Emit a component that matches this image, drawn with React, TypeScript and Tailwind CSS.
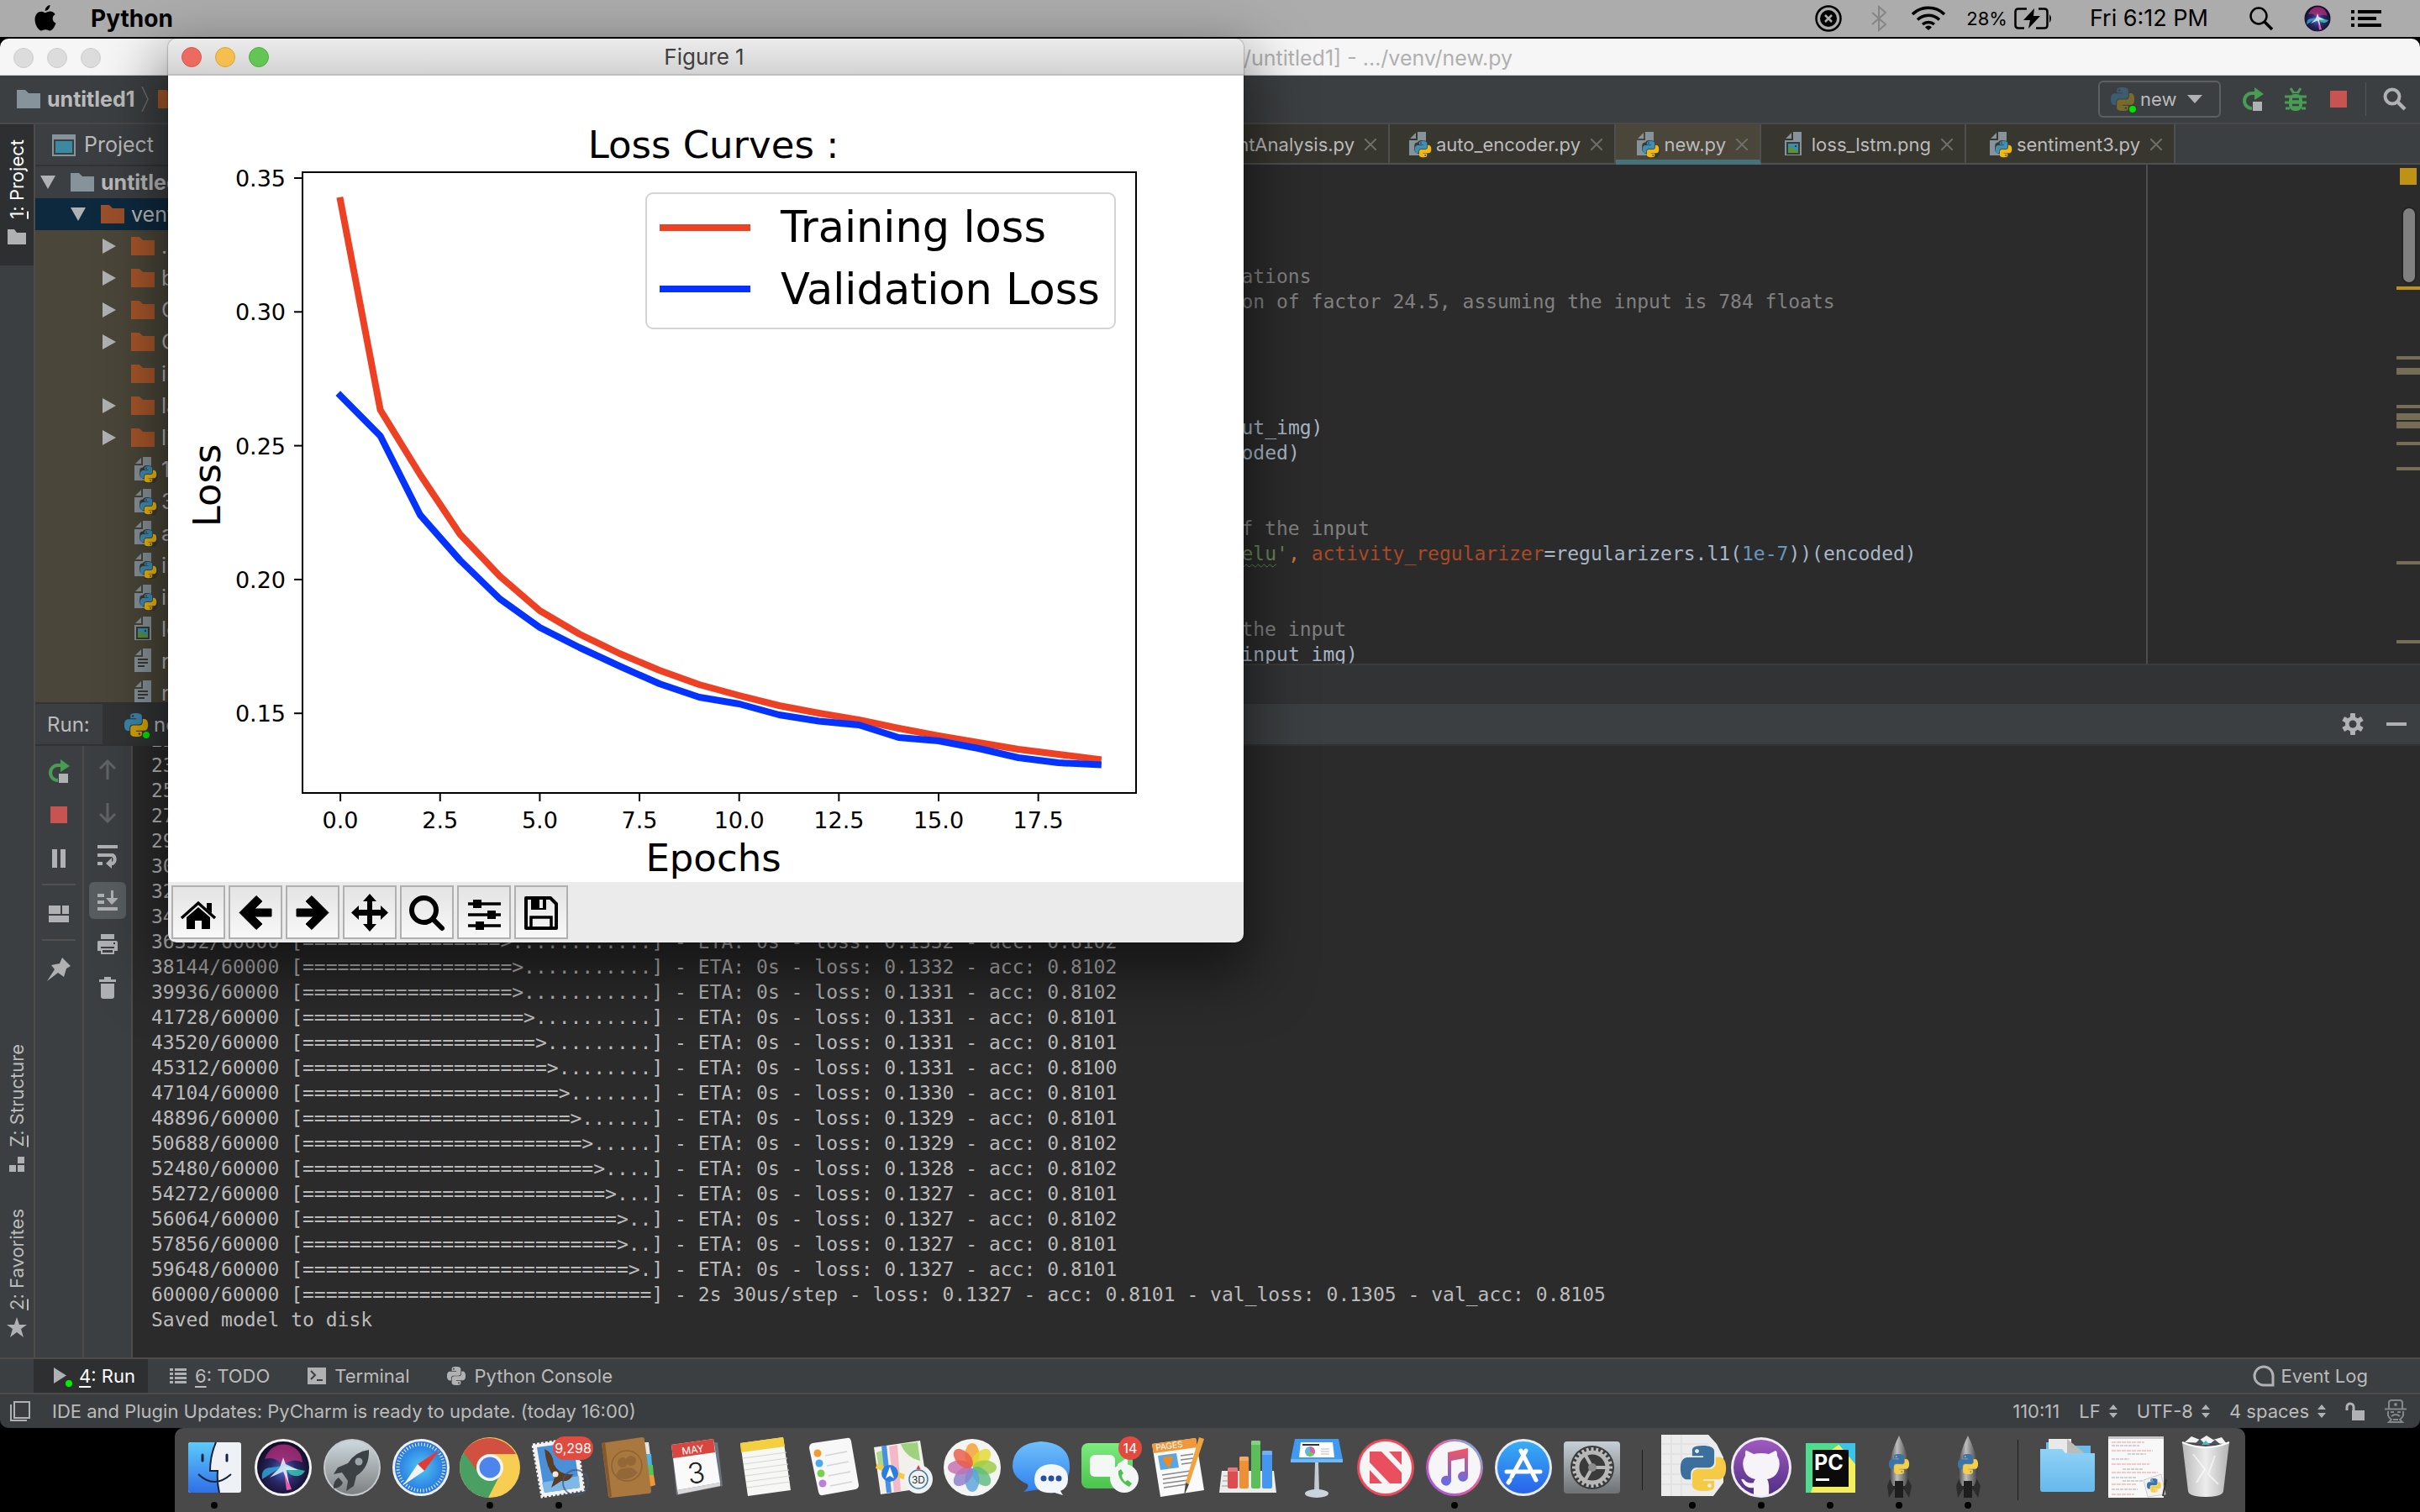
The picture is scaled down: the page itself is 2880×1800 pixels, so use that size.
import React from 'react';
import type { ReactNode } from 'react';

/* ---------- shared glyphs ---------- */

const PY_TOP =
  'M14.25.18l.9.2.73.26.59.3.45.32.34.34.25.34.16.33.1.3.04.26.02.2-.01.13V8.5l-.05.63-.13.55-.21.46-.26.38-.3.31-.33.25-.35.19-.35.14-.33.1-.3.07-.26.04-.21.02H8.77l-.69.05-.59.14-.5.22-.41.27-.33.32-.27.35-.2.36-.15.37-.1.35-.07.32-.04.27-.02.21v3.06H3.17l-.21-.03-.28-.07-.32-.12-.35-.18-.36-.26-.36-.36-.35-.46-.32-.59-.28-.73-.21-.88-.14-1.05-.05-1.23.06-1.22.16-1.04.24-.87.32-.71.36-.57.4-.44.42-.33.42-.24.4-.16.36-.1.32-.05.24-.01h.16l.06.01h8.16v-.83H6.18l-.01-2.75-.02-.37.05-.34.11-.31.17-.28.25-.26.31-.23.38-.2.44-.18.51-.15.58-.12.64-.1.71-.06.77-.04.84-.02 1.27.05zm-6.3 1.98l-.23.33-.08.41.08.41.23.34.33.22.41.09.41-.09.33-.22.23-.34.08-.41-.08-.41-.23-.33-.33-.22-.41-.09-.41.09z';
const PY_BOTTOM =
  'M21.04 6.11l.28.06.32.12.35.18.36.27.36.35.35.47.32.59.28.73.21.88.14 1.04.05 1.23-.06 1.23-.16 1.04-.24.86-.32.71-.36.57-.4.45-.42.33-.42.24-.4.16-.36.09-.32.05-.24.02-.16-.01h-8.22v.82h5.84l.01 2.76.02.36-.05.34-.11.31-.17.29-.25.25-.31.24-.38.2-.44.17-.51.15-.58.13-.64.09-.71.07-.77.04-.84.01-1.27-.04-1.07-.14-.9-.2-.73-.25-.59-.3-.45-.33-.34-.34-.25-.34-.16-.33-.1-.3-.04-.25-.02-.2.01-.13v-5.34l.05-.64.13-.54.21-.46.26-.38.3-.32.33-.24.35-.2.35-.14.33-.1.3-.06.26-.04.21-.02.13-.01h5.84l.69-.05.59-.14.5-.21.41-.28.33-.32.27-.35.2-.36.15-.36.1-.35.07-.32.04-.28.02-.21V6.07h2.09l.14.01zm-6.47 14.25l-.23.33-.08.41.08.41.23.33.33.23.41.08.41-.08.33-.23.23-.33.08-.41-.08-.41-.23-.33-.33-.23-.41-.08-.41.08z';

const PyMark = ({ top = '#3d8fb8', bottom = '#f0b90b' }: { top?: string; bottom?: string }) => (
  <>
    <path d={PY_TOP} fill={top} />
    <path d={PY_BOTTOM} fill={bottom} />
  </>
);

const RunPyIcon = ({ dim = false }: { dim?: boolean }) => (
  <svg viewBox="0 0 32 32" className="h-8 w-8 shrink-0">
    <g transform="translate(1 2) scale(1.17)" opacity={dim ? 0.45 : 0.9}>
      <PyMark top={dim ? '#3d7fa8' : '#3d8fb8'} bottom={dim ? '#c0a010' : '#e5b000'} />
    </g>
    <circle cx="27" cy="28" r="5" fill="#2b3b2b" />
    <circle cx="27" cy="28" r="4" fill="#00e400" />
  </svg>
);

const FileBase = ({ fill = '#87939a' }: { fill?: string }) => (
  <path d="M10 0H20V28H0V10H10ZM8 1V8H1Z" fill={fill} />
);

const FileIcon = ({ kind }: { kind: 'py' | 'img' | 'txt' }) => (
  <svg viewBox="0 0 28 32" className="h-8 w-7 shrink-0">
    <g transform="translate(0 1)">
      <FileBase />
      {kind === 'py' && (
        <g transform="translate(7 11) scale(.8)">
          <path d="M-1 7Q-1 2 4 2Q5-2 12-1Q19-1 19 5Q26 5 26 14Q26 24 18 26H6V19Q-1 18-1 12Z" fill="#3a3934" />
          <PyMark />
        </g>
      )}
      {kind === 'img' && (
        <>
          <rect x="2" y="12" width="16" height="15" fill="#3a3934" />
          <rect x="4" y="14" width="12" height="11" fill="#3a8fae" />
          <path d="M4 20Q8 16 11 20T16 20V25H4Z" fill="#5c9239" />
          <circle cx="13" cy="17" r="1" fill="#222" />
        </>
      )}
      {kind === 'txt' && <path d="M4 13H16M4 17H16M4 21H12" stroke="#3a3934" strokeWidth="2" />}
    </g>
  </svg>
);

const Folder = ({ fill }: { fill: string }) => (
  <svg viewBox="0 0 28 22" className="h-[22px] w-7 shrink-0">
    <path d="M0 0H10L14 4H28V22H0Z" fill={fill} />
  </svg>
);

const Rerun = () => (
  <svg viewBox="0 0 28 28" className="h-7 w-7 shrink-0">
    <path d="M17 7H13A9 9 0 0 0 13 25" fill="none" stroke="#499c54" strokeWidth="4" />
    <path d="M16 0L27 8L16 15Z" fill="#499c54" />
    <rect x="14" y="17" width="11" height="11" fill="#afb1b3" />
  </svg>
);

const StopIcon = () => <span className="block size-5 bg-[#c75450]" />;

/* ---------- macOS menu bar ---------- */

const MenuBar = () => (
  <header className="flex h-11 shrink-0 items-center bg-[#acacac] pr-[46px] pl-10 text-black">
    <svg viewBox="0 0 28 32" className="h-8 w-7 shrink-0">
      <path
        d="M19.5 0C19.7 3.6 16.8 6.9 13.7 7C13.4 3.7 16.4.4 19.5 0ZM14 9.2C15.2 9.2 17 7.600 19.800 7.600C21.600 7.600 24 8.500 25.600 10.900C21.300 13.500 22 19.800 26.500 21.500C25.600 24.500 22.600 30.500 19.300 30.500C17.300 30.500 16.500 29.300 14.200 29.300C11.900 29.300 10.900 30.500 9.200 30.500C5.800 30.500 1.500 23.300 1.500 17.200C1.500 11 5.400 7.700 9.100 7.700C11.300 7.700 13 9.200 14 9.200Z"
        fill="#000"
      />
    </svg>
    <span className="ml-10 text-[28px] leading-8 font-bold">Python</span>
    <div className="ml-auto flex items-center">
      <svg viewBox="0 0 32 32" className="h-8 w-8">
        <circle cx="16" cy="16" r="14.500" fill="none" stroke="#000" strokeWidth="2.500" />
        <circle cx="16" cy="16" r="10" fill="#000" />
        <path d="M12 12L20 20M20 12L12 20" stroke="#acacac" strokeWidth="2.500" />
      </svg>
      <svg viewBox="0 0 20 32" className="ml-[34px] h-8 w-5">
        <path d="M2 9L18 23L10 30V2L18 9L2 23" fill="none" stroke="#858585" strokeWidth="2" />
      </svg>
      <svg viewBox="0 0 42 30" className="ml-7 h-[30px] w-[42px]" fill="none" stroke="#000" strokeWidth="3.500">
        <path d="M2 10A27 27 0 0 1 40 10M8 16.500A19 19 0 0 1 34 16.500M14 22A11 11 0 0 1 28 22" />
        <path d="M21 29L17 25.500A5 5 0 0 1 25 25.500Z" fill="#000" stroke="none" />
      </svg>
      <span className="ml-6 text-[22px] leading-8">28%</span>
      <svg viewBox="0 0 46 26" className="ml-2 h-[26px] w-[46px]">
        <path d="M15 1.500H5Q1.500 1.500 1.500 5V21Q1.500 24.500 5 24.500H12M29 1.500H36Q39.500 1.500 39.500 5V21Q39.500 24.500 36 24.500H26" fill="none" stroke="#000" strokeWidth="2.500" />
        <path d="M24 1L11 15H19L17 25L31 10H23Z" fill="#000" />
        <path d="M42 8Q46 13 42 18Z" fill="#000" />
      </svg>
      <span className="ml-[44px] text-[27px] leading-8">Fri 6:12 PM</span>
      <svg viewBox="0 0 30 30" className="ml-12 h-[30px] w-[30px]">
        <circle cx="12" cy="12" r="9.500" fill="none" stroke="#000" strokeWidth="2.500" />
        <path d="M19 19L28 28" stroke="#000" strokeWidth="3.500" />
      </svg>
      <svg viewBox="0 0 82 82" className="ml-9 size-8">
        <SiriArt r={40} ring={40} cy={41} />
      </svg>
      <svg viewBox="0 0 36 22" className="ml-6 h-[22px] w-9" fill="#000">
        <path d="M0 1H4V5H0ZM8 1H36V5H8ZM0 9H4V13H0ZM8 9H30V13H8ZM0 17H4V21H0ZM8 17H36V21H8Z" />
      </svg>
    </div>
  </header>
);

/* ---------- IDE: top ---------- */

const IdeTitle = () => (
  <div className="flex h-11 shrink-0 items-center rounded-t-[10px] border-b border-[#cfcfcf] bg-[#f6f6f6] pt-[2px] pl-4">
    <div className="flex gap-4">
      {[0, 1, 2].map((i) => (
        <span key={i} className="size-6 rounded-full border border-[#cdcdcd] bg-[#dcdcdc]" />
      ))}
    </div>
    <span className="flex-1 pr-[60px] text-center text-[25px] leading-8 text-[#b0b0b0]">
      untitled1 [~/PycharmProjects/untitled1] - .../venv/new.py
    </span>
  </div>
);

const NavBar = () => (
  <div className="flex h-[58px] shrink-0 items-center border-b-2 border-[#4a4a4a] bg-[#3c3f41] pr-4 pl-5">
    <Folder fill="#87939a" />
    <span className="ml-2 text-[25px] leading-8 font-bold text-[#bbbbbb]">untitled1</span>
    <svg viewBox="0 0 10 30" className="mr-[10px] ml-2 h-[30px] w-[10px]">
      <path d="M1 0L8 15L1 30" fill="none" stroke="#6b6e70" strokeWidth="1.500" />
    </svg>
    <Folder fill="#a6562a" />
    <div className="ml-auto flex items-center">
      <label className="flex h-11 w-[146px] items-center rounded-md border-2 border-[#5e6060] pl-3">
        <RunPyIcon dim />
        <select aria-label="Run configuration" className="ml-1 w-[56px] appearance-none bg-transparent text-[22px] leading-8 text-[#bbbbbb]">
          <option>new</option>
        </select>
        <svg viewBox="0 0 18 10" className="h-[10px] w-[18px]">
          <path d="M0 0H18L9 10Z" fill="#afb1b3" />
        </svg>
      </label>
      <button aria-label="Rerun" className="ml-6"><Rerun /></button>
      <button aria-label="Debug" className="ml-6">
        <svg viewBox="0 0 26 28" className="h-7 w-[26px]">
          <path d="M8 7Q13 3 18 7Z" fill="#499c54" />
          <path d="M7 1L11 7M19 1L15 7" stroke="#499c54" strokeWidth="3" />
          <rect x="5" y="8" width="16" height="20" rx="7" fill="#499c54" />
          <path d="M0 11H26M0 18H26M1 25H6M20 25H25" stroke="#499c54" strokeWidth="3" />
          <path d="M9 14H17M9 21H17" stroke="#3c3f41" strokeWidth="2.500" />
        </svg>
      </button>
      <button aria-label="Stop" className="ml-7"><StopIcon /></button>
      <span className="mr-[20px] ml-[22px] h-10 w-px bg-[#555759]" />
      <button aria-label="Search">
        <svg viewBox="0 0 28 28" className="size-7">
          <circle cx="11" cy="11" r="8.500" fill="none" stroke="#afb1b3" strokeWidth="4" />
          <path d="M17 17L26 26" stroke="#afb1b3" strokeWidth="4.500" />
        </svg>
      </button>
    </div>
  </div>
);

/* ---------- IDE: left stripe ---------- */

const Vertical = ({ hot, text, active = false }: { hot: string; text: string; active?: boolean }) => (
  <span className={`rotate-180 text-[22px] leading-7 [writing-mode:vertical-rl] ${active ? 'text-white' : 'text-[#bbbbbb]'}`}>
    <span className="underline">{hot}</span>: {text}
  </span>
);

const Stripe = () => (
  <nav className="flex w-[42px] shrink-0 flex-col justify-between border-r-2 border-[#4e4b48] bg-[#3c3f41]">
    <button className="flex h-[168px] flex-col items-center gap-3 bg-[#2d2f31] pt-[18px]">
      <Vertical hot="1" text="Project" active />
      <svg viewBox="0 0 22 18" className="h-[18px] w-[22px]">
        <path d="M0 0H8L11 4H22V18H0Z" fill="#afb1b3" />
      </svg>
    </button>
    <div className="flex flex-col items-center gap-[44px] pb-6">
      <button className="flex flex-col items-center gap-3">
        <Vertical hot="Z" text="Structure" />
        <svg viewBox="0 0 18 18" className="size-[18px]" fill="#afb1b3">
          <path d="M10 0H18V8H10ZM0 10H8V18H0ZM10 10H18V18H10Z" />
        </svg>
      </button>
      <button className="flex flex-col items-center gap-2">
        <Vertical hot="2" text="Favorites" />
        <svg viewBox="0 0 24 24" className="size-6">
          <path d="M12 0L15 9H24L17 14L20 24L12 18L4 24L7 14L0 9H9Z" fill="#afb1b3" />
        </svg>
      </button>
    </div>
  </nav>
);

/* ---------- IDE: project tree ---------- */

type Row = { name: string; kind: 'dir' | 'py' | 'img' | 'txt'; arrow?: boolean };
const ROWS: Row[] = [
  { name: '.idea', kind: 'dir', arrow: true },
  { name: 'bin', kind: 'dir', arrow: true },
  { name: 'CNN', kind: 'dir', arrow: true },
  { name: 'Corpus', kind: 'dir', arrow: true },
  { name: 'include', kind: 'dir' },
  { name: 'labels', kind: 'dir', arrow: true },
  { name: 'lib', kind: 'dir', arrow: true },
  { name: '1.py', kind: 'py' },
  { name: '3.py', kind: 'py' },
  { name: 'auto_encoder.py', kind: 'py' },
  { name: 'image.py', kind: 'py' },
  { name: 'images.py', kind: 'py' },
  { name: 'loss_lstm.png', kind: 'img' },
  { name: 'results.txt', kind: 'txt' },
  { name: 'reviews.txt', kind: 'txt' },
];

const Down = () => (
  <svg viewBox="0 0 18 16" className="mr-[18px] h-4 w-[18px] shrink-0"><path d="M0 0H18L9 16Z" fill="#afb1b3" /></svg>
);

const Tree = () => (
  <aside className="flex w-[760px] shrink-0 flex-col overflow-hidden border-r-2 border-[#323232] bg-[#4a4639] text-[25px] text-[#bbbbbb]">
    <div className="flex h-[50px] shrink-0 items-center border-b-2 border-[#323232] bg-[#3c3f41] pt-[2px] pl-5">
      <svg viewBox="0 0 28 26" className="h-[26px] w-7">
        <path d="M0 0H28V26H0ZM2 6V24H26V6Z" fill="#87939a" fillRule="evenodd" />
        <rect x="4" y="8" width="20" height="14" fill="#3d89a2" />
      </svg>
      <span className="ml-[10px]">Project</span>
    </div>
    <ul className="min-h-0 flex-1 overflow-hidden leading-[38px]">
      <li className="flex h-[38px] items-center bg-[#3c3f41] pl-[6px] font-bold">
        <Down />
        <Folder fill="#87939a" />
        <span className="ml-2">untitled1</span>
      </li>
      <li className="flex h-[38px] items-center bg-[#0d293e] pl-[42px]">
        <Down />
        <Folder fill="#9c4f2b" />
        <span className="ml-2">venv</span>
      </li>
      {ROWS.map((r) => (
        <li key={r.name} className="flex h-[38px] items-center pl-20">
          <svg viewBox="0 0 16 18" className="mr-[18px] h-[18px] w-4 shrink-0">
            {r.arrow && <path d="M0 0V18L16 9Z" fill="#afb1b3" />}
          </svg>
          {r.kind === 'dir' ? (
            <Folder fill="#a6562a" />
          ) : (
            <span className="w-7 shrink-0 pl-1"><FileIcon kind={r.kind} /></span>
          )}
          <span className="ml-2">{r.name}</span>
        </li>
      ))}
    </ul>
  </aside>
);

/* ---------- IDE: editor ---------- */

const Tab = ({ name, width, kind = 'py', active = false }: { name: string; width: string; kind?: 'py' | 'img'; active?: boolean }) => (
  <button
    className={`flex shrink-0 items-center justify-end border-r-2 border-[#4d4f50] pr-[14px] text-[22px] text-[#bbbbbb] ${width} ${
      active ? 'border-b-[6px] border-b-[#47727a] bg-[#4a4639] pt-[6px]' : 'border-b-2 border-b-[#4d4f50] bg-[#37362f] pt-[2px]'
    }`}
  >
    <FileIcon kind={kind} />
    <span className="mr-3 ml-1">{name}</span>
    <svg viewBox="0 0 14 14" className="size-[14px]"><path d="M0 0L14 14M14 0L0 14" stroke="#6e6e6a" strokeWidth="2" /></svg>
  </button>
);

const C = ({ children }: { children: ReactNode }) => <span className="text-[#808080]">{children}</span>;
const K = ({ children }: { children: ReactNode }) => <span className="text-[#aa4926]">{children}</span>;
const N = ({ children }: { children: ReactNode }) => <span className="text-[#6897bb]">{children}</span>;
const Str = ({ children }: { children: ReactNode }) => <span className="text-[#6a8759]">{children}</span>;
const O = ({ children }: { children: ReactNode }) => <span className="text-[#cc7832]">{children}</span>;

const CODE: ReactNode[] = [
  '', '', '', '',
  <C># this is the size of our encoded representations</C>,
  <>encoding_dim = <N>32</N>  <C># 32 floats -&gt; compression of factor 24.5, assuming the input is 784 floats</C></>,
  '', '', '', '',
  <>encoded = Dense(<N>128</N><O>,</O> <K>activation</K>=<Str>'relu'</Str>)(input_img)</>,
  <>decoded = Dense(<N>784</N><O>,</O> <K>activation</K>=<Str>'relu'</Str>)(encoded)</>,
  '', '',
  <C># "encoded" is the encoded representation of the input</C>,
  <>encoded = Dense(encoding_dim<O>,</O> <K>activation</K>=<Str>'<span className="underline decoration-[#5b8a5b] decoration-wavy decoration-1 underline-offset-4">relu</span>'</Str><O>,</O> <K>activity_regularizer</K>=regularizers.l1(<N>1e-7</N>))(encoded)</>,
  '', '',
  <C># "decoded" is the lossy reconstruction of the input</C>,
  <>decoded = Dense(<N>784</N><O>,</O> <K>activation</K>=<Str>'sigmoid'</Str>)(input_img)</>,
];

const MARKS = [
  { top: 145, h: 4, hot: true },
  { top: 228, h: 4 }, { top: 242, h: 8 }, { top: 286, h: 4 }, { top: 296, h: 8 }, { top: 306, h: 8 },
  { top: 330, h: 4 }, { top: 360, h: 4 }, { top: 472, h: 4 }, { top: 566, h: 4 },
];

const Editor = () => (
  <section className="flex min-w-0 flex-1 flex-col">
    <div className="flex h-12 shrink-0 bg-[#3c3f41]">
      <div className="w-[522px] shrink-0 border-b-2 border-[#4d4f50] bg-[#37362f]" />
      <Tab name="sentimentAnalysis.py" width="w-[330px]" />
      <Tab name="auto_encoder.py" width="w-[269px]" />
      <Tab name="new.py" width="w-[173px]" active />
      <Tab name="loss_lstm.png" width="w-[244px]" kind="img" />
      <Tab name="sentiment3.py" width="w-[249px]" />
      <div className="flex-1 border-b-2 border-[#4d4f50]" />
    </div>
    <div className="flex min-h-0 flex-1 overflow-hidden bg-[#2b2b2b]">
      <div className="flex-1 overflow-hidden border-r-2 border-[#4d4d4d]">
        <pre className="-mt-[2px] pl-20 font-['DejaVu_Sans_Mono',monospace] text-[23px] leading-[30px] text-[#a9b7c6]">
          {CODE.map((line, i) => (
            <div key={i} className="h-[30px]">{line}</div>
          ))}
        </pre>
      </div>
      <div className="w-[296px] shrink-0" />
      <div className="relative w-7 shrink-0">
        <span className="absolute top-1 left-1 size-5 bg-[#be9117]" />
        <span className="absolute top-[50px] left-[6px] h-[92px] w-[18px] rounded-full border-2 border-[#232323] bg-[#808080]" />
        {MARKS.map((m) => (
          <span key={m.top} className={`absolute w-full ${m.hot ? 'bg-[#be9117]' : 'bg-[#756d56]'}`} style={{ top: m.top, height: m.h }} />
        ))}
      </div>
    </div>
    <div className="h-[46px] shrink-0 border-t-2 border-[#3c3c3c] bg-[#313335]" />
  </section>
);

/* ---------- IDE: run tool window ---------- */

const STEPS: [number, string, string][] = [
  [22016, '0.1334', '0.8101'], [23808, '0.1334', '0.8101'], [25600, '0.1333', '0.8102'], [27392, '0.1333', '0.8102'],
  [29184, '0.1333', '0.8102'], [30976, '0.1333', '0.8102'], [32768, '0.1332', '0.8102'], [34560, '0.1332', '0.8102'],
  [36352, '0.1332', '0.8102'], [38144, '0.1332', '0.8102'], [39936, '0.1331', '0.8102'], [41728, '0.1331', '0.8101'],
  [43520, '0.1331', '0.8101'], [45312, '0.1331', '0.8100'], [47104, '0.1330', '0.8101'], [48896, '0.1329', '0.8101'],
  [50688, '0.1329', '0.8102'], [52480, '0.1328', '0.8102'], [54272, '0.1327', '0.8101'], [56064, '0.1327', '0.8102'],
  [57856, '0.1327', '0.8101'], [59648, '0.1327', '0.8101'],
];
const progress = (n: number) => {
  const p = Math.floor((30 * n) / 60000);
  return '='.repeat(p - 1) + '>' + '.'.repeat(30 - p);
};
const CONSOLE = [
  ...STEPS.map(([n, l, a]) => `${n}/60000 [${progress(n)}] - ETA: 0s - loss: ${l} - acc: ${a}`),
  `60000/60000 [${'='.repeat(30)}] - 2s 30us/step - loss: 0.1327 - acc: 0.8101 - val_loss: 0.1305 - val_acc: 0.8105`,
  'Saved model to disk',
].join('\n');

const Gear = () => (
  <svg viewBox="0 0 26 26" className="size-[26px]">
    <g fill="#afb1b3">
      {[0, 60, 120].map((a) => (
        <rect key={a} x="10" y="0" width="6" height="26" rx="1" transform={`rotate(${a} 13 13)`} />
      ))}
      <circle cx="13" cy="13" r="9" />
    </g>
    <circle cx="13" cy="13" r="4.500" fill="#3c3f41" />
  </svg>
);

const SideBtn = ({ label, children, cls = 'h-7' }: { label: string; children: ReactNode; cls?: string }) => (
  <button aria-label={label} className={`flex w-11 items-center justify-center ${cls}`}>{children}</button>
);

const RunWindow = () => (
  <section className="flex h-[780px] shrink-0 flex-col border-t-2 border-[#323232] bg-[#3c3f41]">
    <div className="flex h-[50px] shrink-0 items-center border-b-2 border-[#323232] text-2xl text-[#bbbbbb]">
      <span className="w-20 pt-[2px] pl-[14px]">Run:</span>
      <div className="flex h-full w-[200px] items-center bg-[#313335] pt-[2px] pl-[25px]">
        <RunPyIcon />
        <span className="ml-1">new</span>
      </div>
      <div className="ml-auto flex items-center gap-[27px] pr-4">
        <button aria-label="Settings"><Gear /></button>
        <button aria-label="Hide" className="h-1 w-6 bg-[#afb1b3]" />
      </div>
    </div>
    <div className="flex min-h-0 flex-1">
      <div className="flex w-[58px] shrink-0 flex-col items-center border-r-2 border-[#4e4b48] pt-4">
        <SideBtn label="Rerun"><Rerun /></SideBtn>
        <SideBtn label="Stop" cls="mt-6 h-7"><StopIcon /></SideBtn>
        <SideBtn label="Pause" cls="mt-6 h-7">
          <svg viewBox="0 0 16 22" className="h-[22px] w-4"><path d="M0 0H6V22H0ZM10 0H16V22H10Z" fill="#afb1b3" /></svg>
        </SideBtn>
        <span className="mt-4 h-[2px] w-10 bg-[#515151]" />
        <SideBtn label="Layout" cls="mt-5 h-7">
          <svg viewBox="0 0 24 20" className="h-5 w-6"><path d="M0 0H14V10H0ZM16 0H24V10H16ZM0 12H24V20H0Z" fill="#afb1b3" /></svg>
        </SideBtn>
        <span className="mt-4 h-[2px] w-10 bg-[#515151]" />
        <SideBtn label="Pin" cls="mt-5 h-7">
          <svg viewBox="0 0 28 28" className="size-7"><path d="M18 0L28 10L23 13L20 23L13 18L0 28L9 14L5 9L15 7Z" fill="#afb1b3" /></svg>
        </SideBtn>
      </div>
      <div className="flex w-[58px] shrink-0 flex-col items-center border-r-2 border-[#4e4b48] pt-[14px]">
        <SideBtn label="Up">
          <svg viewBox="0 0 20 24" className="h-6 w-5"><path d="M10 24V2M1 11L10 2L19 11" fill="none" stroke="#616365" strokeWidth="3" /></svg>
        </SideBtn>
        <SideBtn label="Down" cls="mt-6 h-7">
          <svg viewBox="0 0 20 24" className="h-6 w-5"><path d="M10 0V22M1 13L10 22L19 13" fill="none" stroke="#616365" strokeWidth="3" /></svg>
        </SideBtn>
        <SideBtn label="Soft wrap" cls="mt-6 h-7">
          <svg viewBox="0 0 28 28" className="size-7">
            <path d="M2 2H26M2 12H20A6 6 0 0 1 20 22H17" fill="none" stroke="#afb1b3" strokeWidth="4" />
            <path d="M19 15V28L12 22ZM2 20H8V24H2Z" fill="#afb1b3" />
          </svg>
        </SideBtn>
        <SideBtn label="Scroll to end" cls="mt-4 h-11 rounded-md bg-[#585d60]">
          <svg viewBox="0 0 24 24" className="size-6" fill="#afb1b3"><path d="M0 4H8V8H0ZM0 12H8V16H0ZM0 20H24V24H0ZM16 0H19V9H25L17 17L10 9H16Z" /></svg>
        </SideBtn>
        <SideBtn label="Print" cls="mt-4 h-7">
          <svg viewBox="0 0 24 24" className="size-6">
            <path d="M4 0H20V6H4ZM0 9Q0 8 2 8H22Q24 8 24 10V20H20V15H4V20H0ZM4 17H20V24H4ZM6 19V22H18V19Z" fill="#afb1b3" fillRule="evenodd" />
            <rect x="19" y="10" width="2" height="2" fill="#3c3f41" />
          </svg>
        </SideBtn>
        <SideBtn label="Clear" cls="mt-6 h-7">
          <svg viewBox="0 0 20 26" className="h-[26px] w-5" fill="#afb1b3"><path d="M6 0H14V3H20V6H0V3H6ZM2 8H18V23Q18 26 15 26H5Q2 26 2 23Z" /></svg>
        </SideBtn>
      </div>
      <div className="flex min-w-0 flex-1 flex-col justify-end overflow-hidden bg-[#2b2b2b] pb-[30px] pl-[22px]">
        <pre className="font-['DejaVu_Sans_Mono',monospace] text-[23px] leading-[30px] text-[#bbbbbb]">{CONSOLE}</pre>
      </div>
    </div>
  </section>
);

/* ---------- IDE: bottom ---------- */

const ToolBtn = ({ icon, hot, text }: { icon: ReactNode; hot?: string; text: string }) => (
  <button className="flex items-center gap-[10px]">
    {icon}
    <span>{hot && <><span className="underline underline-offset-4">{hot}</span>: </>}{text}</span>
  </button>
);

const BottomBar = () => (
  <div className="flex h-[44px] shrink-0 items-center border-y-2 border-[#4e4b48] bg-[#3c3f41] pr-[62px] pl-10 text-[22px] text-[#bbbbbb]">
    <button className="flex h-full w-[136px] items-center bg-[#2d2f31] pl-6 text-white">
      <svg viewBox="0 0 24 26" className="mr-[6px] h-[26px] w-6">
        <path d="M0 3V22L15 12.500Z" fill="#afb1b3" />
        <circle cx="18" cy="22" r="4" fill="#00f000" />
      </svg>
      <span><span className="underline underline-offset-4">4</span>: Run</span>
    </button>
    <div className="ml-[26px] flex items-center gap-[45px]">
      <ToolBtn hot="6" text="TODO" icon={<svg viewBox="0 0 20 18" className="h-[18px] w-5" fill="#afb1b3"><path d="M0 0H4V3H0ZM6 0H20V3H6ZM0 5H4V8H0ZM6 5H20V8H6ZM0 10H4V13H0ZM6 10H20V13H6ZM0 15H4V18H0ZM6 15H20V18H6Z" /></svg>} />
      <ToolBtn text="Terminal" icon={<svg viewBox="0 0 22 20" className="h-5 w-[22px]"><rect width="22" height="20" fill="#afb1b3" /><path d="M4 4L9 9L4 14M11 15H18" fill="none" stroke="#3c3f41" strokeWidth="2" /></svg>} />
      <ToolBtn text="Python Console" icon={<svg viewBox="0 0 24 24" className="size-[22px]"><PyMark top="#afb1b3" bottom="#afb1b3" /></svg>} />
    </div>
    <button className="ml-auto flex items-center gap-2">
      <svg viewBox="0 0 26 26" className="size-[26px]"><path d="M13 2A11 11 0 1 0 13 24H24V13A11 11 0 0 0 13 2Z" fill="none" stroke="#afb1b3" strokeWidth="3" /></svg>
      Event Log
    </button>
  </div>
);

const UpDown = () => (
  <svg viewBox="0 0 10 16" className="h-4 w-[10px]"><path d="M0 6L5 0L10 6ZM0 10H10L5 16Z" fill="#afb1b3" /></svg>
);
const Pick = ({ label, value }: { label: string; value: string }) => (
  <label className="flex items-center gap-[10px]">
    <select aria-label={label} className="appearance-none bg-transparent [field-sizing:content]"><option>{value}</option></select>
    <UpDown />
  </label>
);

const StatusBar = () => (
  <footer className="flex h-10 shrink-0 items-center rounded-b-[10px] bg-[#3a3d3f] pr-4 pl-3 text-[22px] leading-7 text-[#bbbbbb]">
    <svg viewBox="0 0 24 24" className="size-6"><path d="M5 1H23V20H5ZM1 4V23H20" fill="none" stroke="#afb1b3" strokeWidth="2" /></svg>
    <span className="ml-[26px]">IDE and Plugin Updates: PyCharm is ready to update. (today 16:00)</span>
    <div className="ml-auto flex items-center gap-[23px]">
      <span>110:11</span>
      <Pick label="Line separator" value="LF" />
      <Pick label="Encoding" value="UTF-8" />
      <Pick label="Indent" value="4 spaces" />
      <svg viewBox="0 0 24 22" className="h-[22px] w-6"><path d="M2 10V6A4 4 0 0 1 10 6V10" fill="none" stroke="#afb1b3" strokeWidth="3" /><rect x="8" y="10" width="15" height="12" fill="#afb1b3" /></svg>
      <svg viewBox="0 0 26 28" className="h-7 w-[26px]" fill="none" stroke="#85888a" strokeWidth="2">
        <path d="M5 11V4Q5 1 8 1H18Q21 1 21 4V11M0 11.500H26M4 14V19Q5 22 8 24L5 27H21L18 24Q21 22 22 19V14M8 20Q13 16 18 20M10 24H16" />
        <circle cx="13" cy="6" r="1" />
        <path d="M7 15H11M15 15H19" />
      </svg>
    </div>
  </footer>
);

/* ---------- matplotlib window ---------- */

const TRAIN = [238.6, 488, 565, 636, 686, 727, 755, 778, 798, 815, 828, 840, 849, 857, 867, 876, 884, 892, 898, 904];
const VALID = [471, 519, 613, 667, 713, 747, 771, 793, 814, 830, 838, 851, 858.5, 863, 878, 882, 891, 902, 908, 910.400];
const px = (e: number) => 205.1 + e * 47.46;
const pts = (ys: number[]) => ys.map((y, i) => `${px(i).toFixed(1)},${y - 90}`).join(' ');

const Plot = () => (
  <svg viewBox="0 0 1280 960" className="block h-[960px] w-full bg-white font-['DejaVu_Sans',sans-serif]">
    <text x="649" y="98" fontSize="45" textAnchor="middle">Loss Curves :</text>
    <text x="649" y="947" fontSize="45" textAnchor="middle">Epochs</text>
    <text x="62" y="488" fontSize="45" textAnchor="middle" transform="rotate(-90 62 488)">Loss</text>
    <g stroke="#000" strokeWidth="2">
      <rect x="160" y="115" width="992" height="739" fill="none" />
      {[0, 1, 2, 3, 4].map((i) => <path key={i} d={`M150 ${122 + i * 159.3}H160`} />)}
      {[0, 1, 2, 3, 4, 5, 6, 7].map((i) => <path key={i} d={`M${px(i * 2.5)} 854V864`} />)}
    </g>
    <g fontSize="27">
      {['0.35', '0.30', '0.25', '0.20', '0.15'].map((t, i) => (
        <text key={t} x="140" y={132 + i * 159.3} textAnchor="end">{t}</text>
      ))}
      {['0.0', '2.5', '5.0', '7.5', '10.0', '12.5', '15.0', '17.5'].map((t, i) => (
        <text key={t} x={px(i * 2.5)} y="896" textAnchor="middle">{t}</text>
      ))}
    </g>
    <g fill="none" strokeWidth="8" strokeLinecap="square" strokeLinejoin="round">
      <polyline points={pts(TRAIN)} stroke="#ee4023" />
      <polyline points={pts(VALID)} stroke="#0433ff" />
      <rect x="569" y="140" width="558" height="161" rx="8" fill="#fff" fillOpacity=".8" stroke="#d4d4d4" strokeWidth="2" />
      <path d="M589 181H689" stroke="#ee4023" />
      <path d="M589 254H689" stroke="#0433ff" />
    </g>
    <g fontSize="51">
      <text x="729" y="198">Training loss</text>
      <text x="729" y="272">Validation Loss</text>
    </g>
  </svg>
);

const FIG_BTNS: [string, ReactNode][] = [
  ['Home', <><path d="M12 39L32 21L52 39" fill="none" stroke="#000" strokeWidth="3.500" /><path d="M42 21H48V33L42 28ZM18 38L32 26L46 38V52H36V42H28V52H18Z" /></>],
  ['Back', <path d="M51 28V37H31L40 46L33 52.500L13 32.500L33 12.500L40 19L31 28Z" strokeLinejoin="round" stroke="#000" strokeWidth="1" />],
  ['Forward', <path d="M13 28V37H33L24 46L31 52.500L51 32.500L31 12.500L24 19L33 28Z" strokeLinejoin="round" stroke="#000" strokeWidth="1" />],
  ['Pan', <path d="M32 10L40 19H35V29H45V24L54 32.500L45 41V36H35V46H40L32 55L24 46H29V36H19V41L10 32.500L19 24V29H29V19H24Z" />],
  ['Zoom', <><circle cx="28.500" cy="29.500" r="14.500" fill="none" stroke="#000" strokeWidth="6" /><path d="M39 40L50 51" stroke="#000" strokeWidth="6" strokeLinecap="round" /></>],
  ['Configure', <><path d="M13 22H52M13 35H52M13 48H52" stroke="#000" strokeWidth="3.500" /><path d="M19 17H29V27H19ZM36 30H46V40H36ZM22 43H32V53H22Z" /></>],
  ['Save', <><path d="M14 15H43L50 22V51H14Z" fill="none" stroke="#000" strokeWidth="4" strokeLinejoin="round" /><path d="M20 15H38V29H20ZM30 17V27H34V17Z" fillRule="evenodd" /><rect x="20" y="38" width="24" height="13" fill="none" stroke="#000" strokeWidth="3.500" /></>],
];

const FigureWindow = () => (
  <div className="absolute top-[46px] left-[200px] w-[1280px] overflow-hidden rounded-[10px] bg-[#ebebeb] shadow-[0_30px_70px_10px_rgba(0,0,0,0.5),0_0_2px_rgba(0,0,0,0.6)]">
    <div className="relative flex h-11 items-center border-b-2 border-[#bdbdbd] bg-gradient-to-b from-[#ececec] to-[#d3d3d3] pt-[2px] pl-4">
      <div className="flex gap-4">
        <button aria-label="Close" className="size-6 rounded-full border border-[#d5574f] bg-[#ed6a5e]" />
        <button aria-label="Minimize" className="size-6 rounded-full border border-[#dca23a] bg-[#f5bf4f]" />
        <button aria-label="Maximize" className="size-6 rounded-full border border-[#4fae3f] bg-[#62c554]" />
      </div>
      <span className="mr-[124px] flex-1 text-center text-[26px] leading-8 text-[#404040]">Figure 1</span>
    </div>
    <Plot />
    <div className="flex h-[72px] gap-1 p-1">
      {FIG_BTNS.map(([label, art]) => (
        <button key={label} aria-label={label} className="size-16 border-2 border-[#b0b0b0] bg-gradient-to-b from-[#e4e4e4] to-[#f8f8f8]">
          <svg viewBox="2 2 60 60" className="size-[60px]">{art}</svg>
        </button>
      ))}
    </div>
  </div>
);

/* ---------- dock ---------- */

function SiriArt({ r, ring, cy }: { r: number; ring: number; cy: number }) {
  const s = r / 31;
  const id = `siri${r}`;
  return (
    <>
      <defs>
        <radialGradient id={id} cx=".5" cy=".55" r=".55">
          <stop offset="0" stopColor="#4d6fd0" /><stop offset=".45" stopColor="#2a2a68" /><stop offset="1" stopColor="#120a22" />
        </radialGradient>
      </defs>
      <circle cx="41" cy={cy} r={ring} fill="#f2f2f2" />
      <circle cx="41" cy={cy} r={r} fill={`url(#${id})`} />
      <g transform={`translate(41 ${cy}) scale(${s})`}>
        <path d="M-22-10Q-14-30 6-27Q22-22 23-6Q10-12 0-2Q-10-14-22-10Z" fill="#c2307f" opacity=".7" />
        <path d="M0-2L26 4Q20 14 8 8Z" fill="#35d0b8" opacity=".8" />
        <path d="M0-2L-25 14Q-27 0-14 0Z" fill="#2cb6e0" opacity=".75" />
        <path d="M0-2L10 26L4 27Z" fill="#e05ab0" />
        <path d="M0-12L3-4L18 3L4 3L7 20L0 5L-16 12L-4 0Z" fill="#eafcff" opacity=".8" />
      </g>
    </>
  );
}

const G = ({ id, a, b }: { id: string; a: string; b: string }) => (
  <linearGradient id={id} x1="0" y1="0" x2="0" y2="1"><stop offset="0" stopColor={a} /><stop offset="1" stopColor={b} /></linearGradient>
);

const Badge = ({ x, y, w, text }: { x: number; y: number; w: number; text: string }) => (
  <>
    <rect x={x} y={y} width={w} height="28" rx="14" fill="#e34a3f" />
    <text x={x + w / 2} y={y + 20} fontSize="16" fill="#fff" textAnchor="middle" fontFamily="Inter">{text}</text>
  </>
);

const PyRocket = ({ id }: { id: string }) => (
  <>
    <defs><linearGradient id={id}><stop offset="0" stopColor="#3c3c3c" /><stop offset=".4" stopColor="#bdbdbd" /><stop offset="1" stopColor="#3a3a3a" /></linearGradient></defs>
    <path d="M31 54L27 64L29 78L35 68H47L53 78L56 64L51 54Z" fill="#2c2c2c" />
    <path d="M41 4Q52 26 53 44Q53 56 48 64H34Q29 56 29 44Q30 26 41 4Z" fill={`url(#${id})`} />
    <path d="M36 58H46V78H36Z" fill="#1e1e1e" />
    <g transform="translate(29 26)"><PyMark top="#3a74a8" bottom="#f6cf4a" /></g>
  </>
);

const teeth = Array.from({ length: 24 }, (_, i) => i * 15);

type DockApp = { name: string; art: ReactNode; run?: boolean };
const APPS: DockApp[] = [
  {
    name: 'Finder', run: true, art: (
      <>
        <defs><G id="fi" a="#5ccbfa" b="#2f6fe8" /></defs>
        <rect x="10" y="12" width="63" height="60" rx="3" fill="#eef2f7" />
        <path d="M13 12H43Q36 28 36 46H45Q44 60 47 72H13Q10 72 10 69V15Q10 12 13 12Z" fill="url(#fi)" />
        <path d="M27 27V34M56 27V34" stroke="#16233a" strokeWidth="3" strokeLinecap="round" />
        <path d="M22 50Q41 68 61 50M43 12Q36 28 36 46H45Q44 60 47 72" fill="none" stroke="#16233a" strokeWidth="2" />
      </>
    ),
  },
  { name: 'Siri', art: <SiriArt r={31} ring={34} cy={42} /> },
  {
    name: 'Launchpad', art: (
      <>
        <defs><G id="la" a="#cdd8dd" b="#7e8082" /></defs>
        <circle cx="41" cy="42" r="34" fill="#c4cacd" /><circle cx="41" cy="42" r="32" fill="url(#la)" />
        <path d="M61 21Q45 23 36 37L24 42L19 50L29 48L36 58L34 70L43 64L46 52Q62 42 61 21Z" fill="#3c4145" />
        <circle cx="49" cy="35" r="4.500" fill="#9ca5a9" /><path d="M25 54Q18 58 19 67Q28 66 30 60Z" fill="#3c4145" />
      </>
    ),
  },
  {
    name: 'Safari', art: (
      <>
        <defs><radialGradient id="sa"><stop offset="0" stopColor="#4fc6f2" /><stop offset="1" stopColor="#2674e0" /></radialGradient></defs>
        <circle cx="41" cy="42" r="34" fill="#eceff2" /><circle cx="41" cy="42" r="31" fill="url(#sa)" />
        <circle cx="41" cy="42" r="27.500" fill="none" stroke="#fff" strokeWidth="4" strokeDasharray="1 2.600" />
        <path d="M63 21L45 46L37 38Z" fill="#e23b33" /><path d="M20 63L37 38L45 46Z" fill="#f4f4f4" />
      </>
    ),
  },
  {
    name: 'Chrome', run: true, art: (
      <>
        <circle cx="41" cy="42" r="36" fill="#f7ce52" />
        <path d="M41 42L54 49L39 78A36 36 0 0 1 10 24Z" fill="#4a9f63" />
        <path d="M9.800 24A36 36 0 0 1 72 26H41L28 49Z" fill="#d1503f" />
        <circle cx="41" cy="42" r="16" fill="#f5f5f5" /><circle cx="41" cy="42" r="12.500" fill="#4c86ec" />
      </>
    ),
  },
  {
    name: 'Mail', run: true, art: (
      <>
        <path d="M10 15L62 7L71 69L21 77Z" fill="#f3f3f3" stroke="#f3f3f3" strokeWidth="3" strokeDasharray="3 2" />
        <path d="M15 18L58 12L66 66L24 72Z" fill="#4a90d9" /><path d="M21 60L65 52L66 66L24 72Z" fill="#7db8e8" />
        <path d="M24 20Q34 24 35 38Q42 52 58 50Q54 60 44 58L32 66L36 54Q26 42 24 20Z" fill="#5a3d25" />
        <circle cx="37" cy="50" r="3.500" fill="#f0e8d8" />
        <circle cx="61" cy="60" r="15" fill="none" stroke="#3d5878" strokeWidth="2" opacity=".7" />
        <Badge x={34} y={5} w={48} text="9,298" />
      </>
    ),
  },
  {
    name: 'Contacts', art: (
      <>
        <path d="M60 12L66 12L68 28L62 30Z" fill="#e6e6e6" /><path d="M62 26L69 26L70 40L64 42Z" fill="#4ab5e8" />
        <path d="M64 39L71 39L72 52L66 53Z" fill="#58c25c" /><path d="M66 51L72 51L74 63L67 65Z" fill="#f0993a" />
        <path d="M10 13L58 6Q61 6 61 9L69 70Q69 73 66 73L21 78Q18 78 18 75Z" fill="#a8783f" />
        <path d="M10 13L14 12L22 77L19 77Z" fill="#86592b" />
        <circle cx="40" cy="40" r="18" fill="none" stroke="#8e6234" strokeWidth="1.500" />
        <circle cx="35" cy="36" r="6" fill="#936737" /><circle cx="45" cy="34" r="6" fill="#936737" />
        <path d="M27 52Q30 42 37 43Q46 40 53 48Q46 56 38 56Q31 56 27 52Z" fill="#936737" />
      </>
    ),
  },
  {
    name: 'Calendar', art: (
      <>
        <path d="M11 15L66 12L72 64L17 75Z" fill="#6b7580" />
        <path d="M11 15L61 8L69 60L18 69Z" fill="#fafafa" /><path d="M11 15L61 8L63 24L13 31Z" fill="#d8473f" />
        <path d="M18 69L69 60V64L19 74Z" fill="#d9d9d9" />
        <text x="0" y="0" fontSize="12" fill="#fff" fontFamily="Inter" transform="translate(24 27) rotate(-8)">MAY</text>
        <text x="0" y="0" fontSize="34" fill="#222" fontFamily="Inter" fontWeight="300" transform="translate(32 62) rotate(-8)">3</text>
      </>
    ),
  },
  {
    name: 'Notes', art: (
      <>
        <path d="M11 13L62 6L71 69L20 76Z" fill="#f7f7f5" /><path d="M11 13L62 6L64 17L12 24Z" fill="#f4cf3f" />
        <path d="M14 31L66 24M15 38L67 31M16 45L68 38M17 52L69 45M18 59L70 52M19 66L70 59" stroke="#d6d6d6" />
      </>
    ),
  },
  {
    name: 'Reminders', art: (
      <>
        <path d="M15 13L56 7Q60 6 61 11L70 63Q70 67 66 68L27 75Q23 76 22 71L11 19Q11 14 15 13Z" fill="#f8f8f8" />
        <circle cx="21" cy="25" r="4.500" fill="#f59a30" /><circle cx="23" cy="37" r="4.500" fill="#4ba9f3" />
        <circle cx="25" cy="49" r="4.500" fill="#78d04c" /><circle cx="27" cy="61" r="4.500" fill="#b97fdc" />
        <path d="M30 28L56 23M32 40L58 35M34 52L60 47M36 64L62 59" stroke="#d5d5d5" strokeWidth="1.500" />
      </>
    ),
  },
  {
    name: 'Maps', art: (
      <>
        <path d="M6 18L61 10L70 66L14 74Z" fill="#f2f0ea" /><path d="M24 17L34 15L38 70L30 71Z" fill="#f5b8c8" />
        <path d="M38 14L58 12L61 34Q44 30 38 14Z" fill="#9fd27c" /><path d="M9 24L22 20L20 40L12 44Z" fill="#a9d98a" />
        <path d="M9 40L64 62" stroke="#f6c944" strokeWidth="6" /><path d="M18 16L24 72" stroke="#4a90e2" strokeWidth="6" />
        <circle cx="25" cy="49" r="10" fill="#2a7de1" /><path d="M25 41L30 55L25 52L20 55Z" fill="#fff" />
        <circle cx="59" cy="56" r="17" fill="#f0f3f6" /><circle cx="59" cy="56" r="11" fill="none" stroke="#457a96" strokeWidth="1.500" />
        <text x="59" y="61" fontSize="12" textAnchor="middle" fill="#333" fontFamily="Inter">3D</text>
        <path d="M59 39L61.500 44H56.500Z" fill="#e23b33" />
      </>
    ),
  },
  {
    name: 'Photos', art: (
      <>
        <circle cx="41" cy="42" r="34" fill="#f4f4f2" />
        {['#f5a030', '#e3d92f', '#9bcb45', '#5fbb83', '#5aa5dc', '#8f7fcb', '#c46fae', '#ea5b47'].map((c, i) => (
          <ellipse key={c} cx="41" cy="27" rx="8.500" ry="14" fill={c} opacity=".82" transform={`rotate(${i * 45} 41 42)`} />
        ))}
      </>
    ),
  },
  {
    name: 'Messages', art: (
      <>
        <defs><G id="ms" a="#6fc0fa" b="#2f80ee" /></defs>
        <path d="M41 11Q75 13 75 41Q75 68 40 68L20 71Q27 66 25 62Q7 54 7 40Q8 13 41 11Z" fill="url(#ms)" />
        <path d="M53 38Q73 39 73 56Q73 66 64 70L67 75L57 72Q33 74 33 56Q34 39 53 38Z" fill="#f1f7fd" />
        <circle cx="44" cy="55" r="3.500" fill="#234f9c" /><circle cx="53" cy="55" r="3.500" fill="#234f9c" /><circle cx="62" cy="55" r="3.500" fill="#234f9c" />
      </>
    ),
  },
  {
    name: 'FaceTime', art: (
      <>
        <defs><G id="ft" a="#7eea80" b="#4bc34d" /></defs>
        <rect x="7" y="13" width="61" height="54" rx="8" fill="url(#ft)" />
        <rect x="17" y="27" width="30" height="26" rx="6" fill="#f4f8f4" /><path d="M50 38L62 30V50L50 44Z" fill="#f4f8f4" />
        <circle cx="58" cy="55" r="17" fill="#f4f5f5" />
        <path d="M51 46Q50 58 64 65L67 61L62 57L59 59Q55 55 55 51L57 49L54 44Z" fill="#4bc34d" />
        <Badge x={51} y={5} w={28} text="14" />
      </>
    ),
  },
  {
    name: 'Pages', art: (
      <>
        <path d="M9 14L61 7L71 69L19 77Z" fill="#fafafa" /><path d="M9 14L61 7L63 18L11 25Z" fill="#f0983a" />
        <text fontSize="10" fill="#fff" fontFamily="Inter" transform="translate(14 22) rotate(-8)">PAGES</text>
        <path d="M16 28L38 25L41 42L19 45Z" fill="#5ba6e2" /><path d="M22 30Q29 28 34 29L30 43Q22 36 22 30Z" fill="#ef8a25" />
        <path d="M43 28L58 26M43 33L58 31M44 38L58 36M21 51L55 46M22 56L54 51M22 61L52 57M23 66L50 62" stroke="#888" strokeWidth="1.500" />
        <path d="M65 6L71 8L53 62L49 60Z" fill="#f1a33c" /><path d="M49 60L53 62L47 76Z" fill="#4b4b4b" />
      </>
    ),
  },
  {
    name: 'Numbers', art: (
      <>
        <path d="M10 46H72L75 72H7Z" fill="#ececec" /><path d="M12 52H17M11 58H17M10 64H17" stroke="#999" />
        <rect x="17" y="42" width="12" height="25" rx="2" fill="#de4c50" /><rect x="31" y="29" width="11" height="38" rx="2" fill="#ee9136" />
        <rect x="45" y="10" width="11" height="57" rx="2" fill="#5cbe5a" /><rect x="58" y="22" width="12" height="45" rx="2" fill="#4596ee" />
        <path d="M17 42H29V47H17ZM31 29H42V34H31ZM45 10H56V15H45ZM58 22H70V27H58Z" fill="#fff" opacity=".25" />
      </>
    ),
  },
  {
    name: 'Keynote', art: (
      <>
        <path d="M39 36H43L44 72H38Z" fill="#c3cad0" /><ellipse cx="41" cy="73" rx="14" ry="5" fill="#c9d4dd" />
        <path d="M15 8H67L72 33V36H10V33Z" fill="#3f9af0" /><path d="M10 32H72V36H10Z" fill="#6db9f5" />
        <path d="M22 12H60L62 30H20Z" fill="#fff" /><path d="M24 15H44" stroke="#333" strokeWidth="2" />
        <circle cx="33" cy="23" r="6" fill="#5ab5e8" /><path d="M33 23V17A6 6 0 0 1 38 26Z" fill="#e85a9a" /><path d="M33 23L38 26A6 6 0 0 1 29 27Z" fill="#7cc24a" />
        <path d="M46 20H56M46 23H56M46 26H56" stroke="#bbb" />
      </>
    ),
  },
  {
    name: 'News', art: (
      <>
        <circle cx="41" cy="42" r="34" fill="#ec4a5c" /><circle cx="41" cy="42" r="31" fill="#f5f5f5" />
        <path d="M22 23H36L60 48V61H46L22 36Z" fill="#e94f5f" /><path d="M45 23H60V39ZM22 45L37 61H22Z" fill="#e94f5f" />
      </>
    ),
  },
  {
    name: 'iTunes', run: true, art: (
      <>
        <defs>
          <linearGradient id="it" x1="0" y1="1" x2="1" y2="0"><stop offset="0" stopColor="#8a5cf5" /><stop offset=".5" stopColor="#f0568f" /><stop offset="1" stopColor="#5cc4f5" /></linearGradient>
          <G id="itn" a="#f4545f" b="#5a6cf2" />
        </defs>
        <circle cx="41" cy="42" r="34" fill="url(#it)" /><circle cx="41" cy="42" r="31" fill="#f6f6f8" />
        <path d="M33 24L57 19V52A6 6 0 1 1 53 47V31L37 34V58A6 6 0 1 1 33 52Z" fill="url(#itn)" />
      </>
    ),
  },
  {
    name: 'App Store', art: (
      <>
        <defs><G id="as" a="#36aef5" b="#2a62ea" /></defs>
        <circle cx="41" cy="42" r="34" fill="#e6ebf0" /><circle cx="41" cy="42" r="31" fill="url(#as)" />
        <path d="M44 22L27 53M38 22L56 57M21 47H47M54 47H61M25 57L23 60" stroke="#fff" strokeWidth="5" strokeLinecap="round" />
      </>
    ),
  },
  {
    name: 'System Preferences', art: (
      <>
        <defs><G id="sp" a="#c5d0d6" b="#6f7173" /></defs>
        <rect x="7" y="11" width="67" height="62" rx="4" fill="url(#sp)" />
        <circle cx="41" cy="42" r="26" fill="#3b3b3b" />
        {teeth.map((a) => <rect key={a} x="39.500" y="18" width="3" height="6" fill="#bdbdbd" transform={`rotate(${a} 41 42)`} />)}
        <circle cx="41" cy="42" r="18" fill="none" stroke="#b7b7b7" strokeWidth="5" />
        <path d="M41 42L59 42M41 42L32 26M41 42L32 58" stroke="#b7b7b7" strokeWidth="4" /><circle cx="41" cy="42" r="5" fill="#8c8c8c" />
      </>
    ),
  },
];

const DEV: DockApp[] = [
  {
    name: 'Python Script', run: true, art: (
      <>
        <path d="M4 3H60L70 14L78 30V60L66 76H4Z" fill="#ececec" />
        <path d="M4 14H60M4 26H60M4 38H60M4 50H60M4 62H50M16 3V76M28 3V76" stroke="#e2e2e2" strokeWidth="2" />
        <g transform="translate(27 16) scale(2.250)"><PyMark top="#3b6f9e" bottom="#f5cb45" /></g>
      </>
    ),
  },
  {
    name: 'GitHub Desktop', run: true, art: (
      <>
        <defs><G id="gh" a="#a05ac0" b="#4f2e86" /></defs>
        <circle cx="41" cy="42" r="36" fill="#efeaf4" /><circle cx="41" cy="42" r="33" fill="url(#gh)" />
        <path d="M22 25Q22 21 24 22L32 26Q41 24 50 26L58 22Q60 22 60 28Q65 36 61 46Q58 54 48 56Q51 60 50 74Q41 77 32 74V66Q23 68 18 58Q16 55 20 56Q25 62 32 60Q32 58 34 56Q24 54 21 46Q17 36 22 28Z" fill="#f6f4f9" />
      </>
    ),
  },
  {
    name: 'PyCharm', run: true, art: (
      <>
        <rect x="12" y="13" width="59" height="59" fill="#f3ef5c" /><path d="M12 13H54L30 30L18 72H12Z" fill="#4fdc90" /><path d="M50 13H71V38Z" fill="#3cc3ea" />
        <rect x="20" y="21" width="43" height="44" fill="#0b0b0b" />
        <text x="22" y="45" fontSize="25" fontWeight="700" fill="#fff" fontFamily="Inter">PC</text>
        <rect x="24" y="55" width="16" height="3" fill="#fff" />
      </>
    ),
  },
  { name: 'Python Launcher', run: true, art: <PyRocket id="r1" /> },
  { name: 'Python Launcher 2', run: true, art: <PyRocket id="r2" /> },
];

const FILES: DockApp[] = [
  {
    name: 'Downloads', art: (
      <>
        <defs><G id="fo" a="#8fd2f6" b="#66b8ec" /></defs>
        <path d="M15 12H33L36 16H68V40H15Z" fill="#6cbce9" /><path d="M18 8H45V30H18Z" fill="#e9e9e9" /><path d="M40 8L62 26H40Z" fill="#bbb" />
        <path d="M8 20H34L38 25H73V68Q73 71 70 71H11Q8 71 8 68Z" fill="url(#fo)" />
      </>
    ),
  },
  {
    name: 'Document', art: (
      <>
        <rect x="7" y="5" width="66" height="73" fill="#f8f8f8" /><rect x="7" y="5" width="66" height="3" fill="#c8c8c8" />
        <path d="M11 12H50M11 22H60M11 38H56M11 48H66M11 62H40M11 74H38" stroke="#e99" strokeDasharray="5 1" />
        <path d="M11 16H44M30 26H52M11 32H32M24 44H48M11 54H40M24 58H50M11 68H42" stroke="#aaa" strokeDasharray="4 1" />
        <path d="M49 57L70 50L75 74L54 77Z" fill="#f2f2f2" stroke="#ccc" />
        <g transform="translate(53 55) scale(.7)"><PyMark top="#3a74a8" bottom="#f6cf4a" /></g>
        <path d="M76 56L72 76" stroke="#333" strokeWidth="2" />
      </>
    ),
  },
  {
    name: 'Trash', art: (
      <>
        <defs><linearGradient id="tr"><stop offset="0" stopColor="#b9b9b9" /><stop offset=".5" stopColor="#ededed" /><stop offset="1" stopColor="#b3b3b3" /></linearGradient></defs>
        <path d="M16 12L24 5L34 9L42 4L50 9L60 6L66 14Z" fill="#f2f2f2" /><path d="M28 14L34 8L40 14ZM46 14L52 9L58 14Z" fill="#4a5660" /><path d="M36 15L41 10L46 15Z" fill="#4fb5c8" />
        <path d="M13 12Q41 22 69 12L62 70Q61 77 41 77Q21 77 20 70Z" fill="url(#tr)" />
        <path d="M13 12Q41 24 69 12" fill="none" stroke="#fafafa" strokeWidth="2" />
        <path d="M26 26L40 44L30 60M52 28L44 50L56 62" fill="none" stroke="#fff" strokeWidth="2" opacity=".6" />
      </>
    ),
  },
];

const Slots = ({ apps }: { apps: DockApp[] }) => (
  <>
    {apps.map((a) => (
      <button key={a.name} aria-label={a.name} className="flex w-[82px] shrink-0 flex-col items-center">
        <svg viewBox="0 0 82 82" className="size-[82px]">{a.art}</svg>
        {a.run && <span className="mt-px size-2 rounded-full bg-black" />}
      </button>
    ))}
  </>
);

const Dock = () => (
  <div className="flex h-[100px] shrink-0 justify-center bg-black">
    <div className="flex rounded-t-[10px] bg-[#4a494a] px-[6px] pt-[5px]">
      <Slots apps={APPS} />
      <span className="mx-[18px] mt-[21px] h-12 w-px bg-[#1c1c1c]" />
      <Slots apps={DEV} />
      <span className="mx-[18px] mt-[9px] h-[72px] w-px bg-[#1c1c1c]" />
      <Slots apps={FILES} />
    </div>
  </div>
);

export default function App() {
  return (
    <div className="relative flex h-screen w-full flex-col overflow-hidden bg-black font-['Inter',sans-serif]">
      <MenuBar />
      <main className="mt-[2px] flex min-h-0 flex-1 flex-col">
        <IdeTitle />
        <NavBar />
        <div className="flex min-h-0 flex-1">
          <Stripe />
          <div className="flex min-w-0 flex-1 flex-col">
            <div className="flex min-h-0 flex-1">
              <Tree />
              <Editor />
            </div>
            <RunWindow />
          </div>
        </div>
        <BottomBar />
        <StatusBar />
      </main>
      <Dock />
      <FigureWindow />
    </div>
  );
}
